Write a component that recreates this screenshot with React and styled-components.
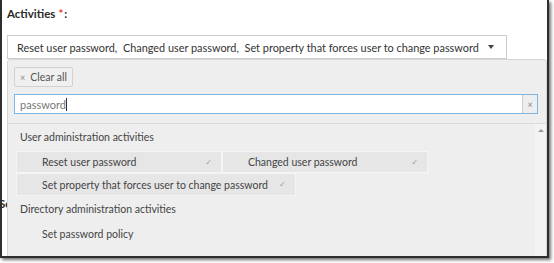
import styled, { createGlobalStyle } from 'styled-components';

const GlobalStyle = createGlobalStyle`
  html, body { margin: 0; padding: 0; background: #fff; }
  body { font-family: Lato, "Open Sans", sans-serif; color: #333; }
  * { box-sizing: border-box; }
`

const Screen = styled.div`
    width: 554px;
    height: 263px;
    overflow: hidden;
    background: #fff;
`

const Window = styled.div`
    position: relative;
    width: 549px;
    height: 258px;
    border: 2px solid #2e2e2e;
    border-top: none;
    box-shadow: 2px 2px 3px rgba(0, 0, 0, 0.55);
    background: #fff;
    overflow: hidden;
`

const Form = styled.div`
    display: flex;
    flex-direction: column;
    padding: 6px 0 0 5px;
`

const Label = styled.div`
    font-size: 11.5px;
    font-weight: 700;
    line-height: 16px;
    color: #2a2a2a;
    margin-left: ${props => props.$shift || 0}px;
    margin-top: ${props => props.$top || 0}px;
`

const Required = styled.span`
    color: #e33;
    margin: 0 1px 0 3px;
`

const Select = styled.div`
    margin-top: 13px;
    width: 500px;
    height: 24px;
    border: 1px solid #ccc;
    display: flex;
    align-items: center;
    padding: 0 0 0 9px;
    font-size: 10.9px;
    color: #333;
    white-space: pre;
`

const Caret = styled.span`
    margin-left: 9px;
    width: 0;
    height: 0;
    border-left: 3px solid transparent;
    border-right: 3px solid transparent;
    border-top: 4px solid #444;
`

const Dropdown = styled.div`
    position: absolute;
    left: 5px;
    top: 59px;
    right: 0;
    bottom: -2px;
    background: #eee;
    border: 1px solid #d6d6d6;
    border-radius: 3px;
    display: flex;
    flex-direction: column;
`

const Top = styled.div`
    display: flex;
    flex-direction: column;
    align-items: flex-start;
    gap: 7px;
    padding: 7px 8px 9px 6px;
    border-bottom: 1px solid #dcdcdc;
`

const ClearAll = styled.button`
    height: 20px;
    padding: 0 5px;
    border: 1px solid #d2d2d2;
    border-radius: 2px;
    background: #f0f0f0;
    font-family: inherit;
    font-size: 10.5px;
    color: #555;
    display: flex;
    align-items: center;
    gap: 5px;
`

const X = styled.span`
    font-size: 9px;
    color: #888;
`

const Search = styled.div`
    width: 524px;
    height: 20px;
    border: 1px solid #7fb5e3;
    background: #fff;
    display: flex;
    align-items: center;
`

const SearchText = styled.div`
    flex: 1;
    padding-left: 5px;
    font-size: 11px;
    color: #777;
    display: flex;
    align-items: center;
`

const Cursor = styled.span`
    width: 1px;
    height: 13px;
    background: #333;
`

const SearchClear = styled.div`
    width: 15px;
    height: 18px;
    background: #eee;
    border-left: 1px solid #ccc;
    display: flex;
    align-items: center;
    justify-content: center;
    font-size: 9px;
    color: #888;
`

const Body = styled.div`
    flex: 1;
    display: flex;
`

const List = styled.div`
    flex: 1;
    padding: 4px 0 0 8px;
`

const GroupTitle = styled.div`
    height: 18px;
    line-height: 18px;
    padding-left: 4px;
    font-size: 10.5px;
    color: #444;
    margin: ${props => props.$top || 0}px 0 5px;
`

const Options = styled.div`
    display: flex;
    flex-wrap: wrap;
    width: 420px;
`

const Option = styled.div`
    min-width: 206px;
    height: ${props => props.$h || 22}px;
    padding: 0 9px 0 25px;
    display: flex;
    align-items: center;
    justify-content: space-between;
    gap: 11px;
    font-size: 10.5px;
    color: #444;
    background: ${props => props.$selected ? '#e6e6e6' : 'transparent'};
    border: 1px solid ${props => props.$selected ? '#f5f5f5' : 'transparent'};
`

const Check = styled.span`
    font-family: "DejaVu Sans", sans-serif;
    font-size: 8px;
    color: #999;
`

const Scrollbar = styled.div`
    width: 11px;
    background: #f3f3f3;
    display: flex;
    justify-content: center;
    padding-top: 5px;
`

const Arrow = styled.span`
    width: 0;
    height: 0;
    border-left: 3px solid transparent;
    border-right: 3px solid transparent;
    border-bottom: 3px solid #999;
`

const groups = [
    {
        title: 'User administration activities',
        options: [
            { label: 'Reset user password', selected: true },
            { label: 'Changed user password', selected: true },
            { label: 'Set property that forces user to change password', selected: true, h: 23 },
        ],
    },
    {
        title: 'Directory administration activities',
        options: [{ label: 'Set password policy' }],
    },
]

export default function App() {
    return (
        <Screen>
            <GlobalStyle />
            <Window>
                <Form>
                    <Label>Activities<Required>*</Required>:</Label>
                    <Select>
                        Reset user password,  Changed user password,  Set property that forces user to change password
                        <Caret />
                    </Select>
                    <Label $shift={-8} $top={137}>Se</Label>
                </Form>
                <Dropdown>
                    <Top>
                        <ClearAll><X>×</X>Clear all</ClearAll>
                        <Search>
                            <SearchText>password<Cursor /></SearchText>
                            <SearchClear>×</SearchClear>
                        </Search>
                    </Top>
                    <Body>
                        <List>
                            {groups.map((g, i) => (
                                <div key={g.title}>
                                    <GroupTitle $top={i ? 4 : 0}>{g.title}</GroupTitle>
                                    <Options>
                                        {g.options.map(o => (
                                            <Option key={o.label} $selected={o.selected} $h={o.h}>
                                                {o.label}
                                                {o.selected && <Check>✓</Check>}
                                            </Option>
                                        ))}
                                    </Options>
                                </div>
                            ))}
                        </List>
                        <Scrollbar><Arrow /></Scrollbar>
                    </Body>
                </Dropdown>
            </Window>
        </Screen>
    )
}
